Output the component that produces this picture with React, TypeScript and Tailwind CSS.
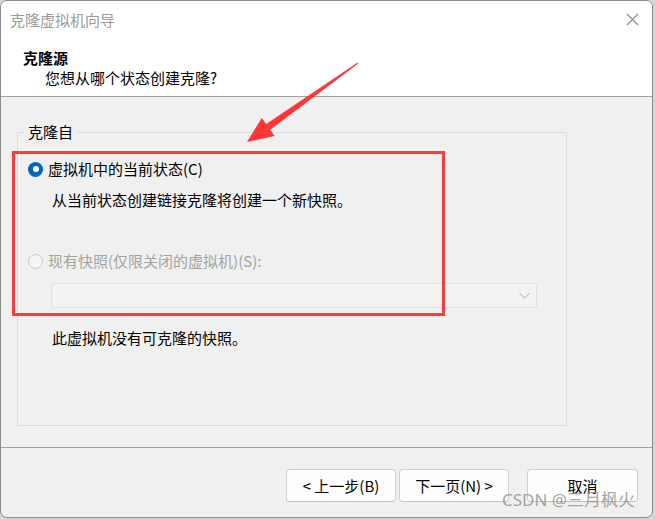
import React from "react";

const font = { fontFamily: '"Noto Sans CJK SC", "Noto Sans", sans-serif' };

const App = () => {
  return (
    <div className="relative w-[655px] h-[519px] overflow-hidden bg-[#d6d6d6]" style={font}>
      {/* Dialog window */}
      <div className="w-[653px] h-[518px] flex flex-col border border-[#8c8c8c] rounded-[7px] overflow-hidden bg-[#f0f0f0] text-[15px] text-black">
        {/* Title bar */}
        <div className="h-[37px] bg-white flex items-center justify-between pl-[9px] pr-[13px]">
          <span className="text-[15px] leading-[20px] text-[#9b9b9b]">克隆虚拟机向导</span>
          <svg width="13" height="13" viewBox="0 0 13 13">
            <path d="M1 1 L12 12 M12 1 L1 12" stroke="#8a8a8a" strokeWidth="1.1" />
          </svg>
        </div>

        {/* Header */}
        <div className="h-[59px] bg-white pt-[10px] pl-[22px] border-b border-[#a0a0a0]">
          <div className="font-bold leading-[20px]">克隆源</div>
          <div className="ml-[22px] leading-[20px]">您想从哪个状态创建克隆?</div>
        </div>

        {/* Body */}
        <div className="h-[350px] pt-[25px]">
          <fieldset className="ml-[16px] w-[550px] h-[304px] border border-[#dcdcdc]">
            <legend className="ml-[6px] px-[4px] leading-[20px]">克隆自</legend>

            <div className="mt-[17px] ml-[10px] flex items-center gap-[5px] h-[20px]">
              <div className="w-[15px] h-[15px] rounded-full bg-[#0067c0] flex items-center justify-center">
                <div className="w-[6px] h-[6px] rounded-full bg-white" />
              </div>
              <span className="leading-[20px]">虚拟机中的当前状态(C)</span>
            </div>
            <div className="mt-[11px] ml-[34px] leading-[20px]">从当前状态创建链接克隆将创建一个新快照。</div>

            <div className="mt-[41px] ml-[10px] flex items-center gap-[5px] h-[20px]">
              <div className="w-[15px] h-[15px] rounded-full border border-[#c6c6c6] bg-[#f6f6f6]" />
              <span className="leading-[20px] text-[#a3a3a3]">现有快照(仅限关闭的虚拟机)(S):</span>
            </div>
            <div className="mt-[12px] ml-[33px] w-[486px] h-[25px] border border-[#e2e2e2] bg-[#f3f3f3] rounded-[2px] flex items-center justify-end pr-[6px]">
              <svg width="11" height="6" viewBox="0 0 11 6">
                <path d="M0.5 0.5 L5.5 5 L10.5 0.5" fill="none" stroke="#a8a8a8" strokeWidth="1" />
              </svg>
            </div>
            <div className="mt-[20px] ml-[34px] leading-[20px]">此虚拟机没有可克隆的快照。</div>
          </fieldset>
        </div>

        {/* Footer */}
        <div className="flex-1 border-t border-[#a0a0a0] flex items-start justify-end pt-[21px] pr-[14px]">
          <button className="w-[110px] h-[33px] bg-[#fdfdfd] border border-[#d0d0d0] border-b-[#c2c2c2] rounded-[4px] leading-[20px]">&lt; 上一步(B)</button>
          <button className="ml-[3px] w-[110px] h-[33px] bg-[#fdfdfd] border border-[#d0d0d0] border-b-[#c2c2c2] rounded-[4px] leading-[20px]">下一页(N) &gt;</button>
          <button className="ml-[18px] w-[111px] h-[33px] bg-[#fdfdfd] border border-[#d0d0d0] border-b-[#c2c2c2] rounded-[4px] leading-[20px]">取消</button>
        </div>
      </div>

      {/* Red annotation box */}
      <div className="absolute left-[12px] top-[151px] w-[433px] h-[165px] border-[3px] border-[#ff3b3b]" />

      {/* Red annotation arrow */}
      <svg className="absolute left-0 top-0" width="655" height="519" viewBox="0 0 655 519">
        <polygon
          points="358.3,63.4 270.2,129.8 274.6,135.9 247,142 261.8,117.9 266.2,124 357.7,62.6"
          fill="#ff3636"
        />
      </svg>

      {/* Watermark */}
      <div className="absolute left-[502px] top-[488px] text-[17px] leading-[24px] text-[#8e8e8e]/80 tracking-[0px]" style={{ fontFamily: '"Noto Sans", "Noto Sans CJK SC", sans-serif' }}>
        CSDN @三月枫火
      </div>
    </div>
  );
};

export default App;
